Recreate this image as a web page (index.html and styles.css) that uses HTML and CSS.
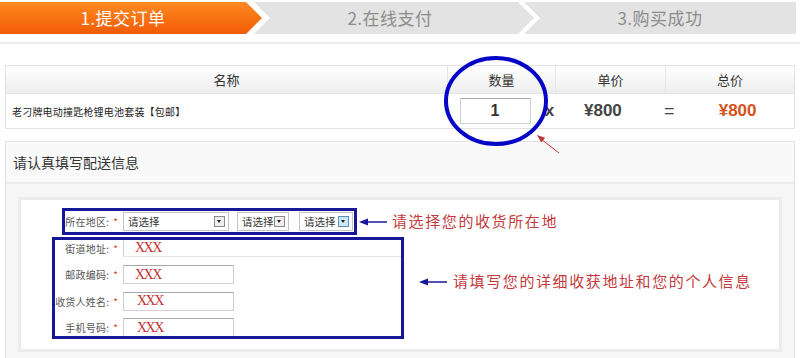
FILE: index.html
```html
<!DOCTYPE html>
<html lang="zh-CN">
<head>
    <meta charset="UTF-8">
    <title>提交订单</title>
    <link rel="stylesheet" href="styles.css">
</head>
<body>
    <div class="steps">
        <div class="step step-first">1.提交订单</div>
        <div class="step step-mid">2.在线支付</div>
        <div class="step step-last">3.购买成功</div>
    </div>
    <div class="steps-line"></div>

    <div class="cart">
        <div class="cart-head">
            <div class="col">名称</div>
            <div class="col">数量</div>
            <div class="col">单价</div>
            <div class="col">总价</div>
        </div>
        <div class="cart-row">
            <div class="item-name">老刁牌电动撞匙枪锂电池套装【包邮】</div>
            <input class="qty-input" type="text" value="1">
            <span class="op">x</span>
            <span class="price">¥800</span>
            <span class="op op-eq">=</span>
            <span class="price price-total">¥800</span>
        </div>
    </div>

    <div class="delivery">
        <div class="delivery-title">请认真填写配送信息</div>
        <div class="delivery-body">
            <div class="form-box">
                <div class="form-row">
                    <label class="form-label">所在地区:<em>*</em></label>
                    <div class="select select-province">请选择<i></i></div>
                    <div class="select select-city">请选择<i></i></div>
                    <div class="select select-area">请选择<i class="hover"></i></div>
                </div>
                <div class="form-row">
                    <label class="form-label">街道地址:<em>*</em></label>
                    <input class="field field-wide" type="text" value="XXX">
                </div>
                <div class="form-row">
                    <label class="form-label">邮政编码:<em>*</em></label>
                    <input class="field" type="text" value="XXX">
                </div>
                <div class="form-row">
                    <label class="form-label">收货人姓名:<em>*</em></label>
                    <input class="field field-shift" type="text" value="XXX">
                </div>
                <div class="form-row">
                    <label class="form-label">手机号码:<em>*</em></label>
                    <input class="field field-shift" type="text" value="XXX">
                </div>
            </div>
        </div>
    </div>

    <!-- annotations drawn on top of the page -->
    <svg class="annot" width="800" height="358" viewBox="0 0 800 358">
        <ellipse cx="496" cy="101" rx="50" ry="43" fill="none" stroke="#0505c8" stroke-width="4"/>
        <line x1="559" y1="153" x2="541" y2="139" stroke="#c23232" stroke-width="1"/>
        <polygon points="537,135 545.1,137.8 541.3,142.4" fill="#c23232"/>
        <rect x="63.5" y="209.5" width="292" height="24" fill="none" stroke="#17179a" stroke-width="3"/>
        <rect x="53.5" y="238.5" width="349" height="99" fill="none" stroke="#17179a" stroke-width="3"/>
        <line x1="365" y1="222" x2="387" y2="222" stroke="#17179a" stroke-width="1.5"/>
        <polygon points="359,222 368,218.5 368,225.5" fill="#17179a"/>
        <line x1="425" y1="282" x2="447" y2="282" stroke="#17179a" stroke-width="1.5"/>
        <polygon points="419,282 428,278.5 428,285.5" fill="#17179a"/>
    </svg>
    <div class="note note-area">请选择您的收货所在地</div>
    <div class="note note-detail">请填写您的详细收获地址和您的个人信息</div>
</body>
</html>
```

FILE: styles.css
```css
body {
    margin: 0;
    width: 800px;
    height: 358px;
    overflow: hidden;
    position: relative;
    background: #fff;
    font-family: "Liberation Sans", "Noto Sans CJK SC", sans-serif;
    color: #333;
}

/* steps bar */
.steps {
    display: flex;
    width: 796px;
    height: 32px;
    margin-top: 2px;
}

.step {
    height: 32px;
    line-height: 32px;
    text-align: center;
    font-family: "Noto Sans CJK SC", sans-serif;
    font-size: 17px;
    letter-spacing: 0.5px;
    color: #8c8c8c;
    background: #e3e3e3;
    box-sizing: border-box;
}

.step-first {
    width: 262px;
    padding-right: 16px;
    color: #fff;
    background: linear-gradient(to bottom, #ff8a22, #f25a04);
    clip-path: polygon(0 0, 246px 0, 262px 50%, 246px 100%, 0 100%);
}

.step-mid {
    width: 280px;
    margin-left: -8px;
    padding-right: 8px;
    clip-path: polygon(0 0, 264px 0, 280px 50%, 264px 100%, 0 100%, 16px 50%);
}

.step-last {
    flex: 1;
    margin-left: -10px;
    clip-path: polygon(0 0, 100% 0, 100% 100%, 0 100%, 16px 50%);
}

.steps-line {
    height: 2px;
    margin-top: 8px;
    background: #ededed;
}

/* cart table */
.cart {
    margin: 21px 5px 0;
    border: 1px solid #e3e3e3;
}

.cart-head {
    display: grid;
    grid-template-columns: 441px 108px 110px 1fr;
    height: 27px;
    border-bottom: 1px solid #e6e6e6;
    background: linear-gradient(to bottom, #fff, #ededed);
}

.cart-head .col {
    line-height: 27px;
    text-align: center;
    font-family: "Noto Sans CJK SC", sans-serif;
    font-size: 13px;
    color: #333;
}

.cart-head .col + .col {
    border-left: 1px solid #e6e6e6;
}

.cart-row {
    display: flex;
    align-items: center;
    height: 34px;
}

.item-name {
    width: 435px;
    padding-left: 6px;
    font-family: "Noto Sans CJK SC", sans-serif;
    font-size: 10px;
    letter-spacing: 0.2px;
    color: #222;
}

.qty-input {
    width: 71px;
    height: 26px;
    margin-left: 17px;
    padding: 0;
    box-sizing: border-box;
    border: 1px solid #cfcfcf;
    border-top-color: #a8a8a8;
    text-align: center;
    font-family: "Liberation Sans", sans-serif;
    font-size: 16px;
    font-weight: bold;
    color: #333;
}

.op {
    width: 18px;
    margin-left: 10px;
    text-align: center;
    font-size: 17px;
    font-weight: bold;
    color: #444;
}

.op-eq {
    width: 24px;
    font-weight: normal;
    font-size: 18px;
}

.price {
    width: 90px;
    text-align: center;
    font-size: 17px;
    font-weight: bold;
    color: #444;
}

.price-total {
    width: 114px;
    color: #d4521c;
}

/* delivery section */
.delivery {
    margin: 12px 5px 0;
    border: 1px solid #e3e3e3;
    border-bottom: none;
}

.delivery-title {
    height: 40px;
    line-height: 40px;
    padding-left: 7px;
    font-family: "Noto Sans CJK SC", sans-serif;
    font-size: 14px;
    color: #333;
    background: #f9f9f9;
    border-bottom: 2px solid #ececec;
}

.delivery-body {
    padding: 13px 12px 10px;
    background: #f6f6f6;
}

.form-box {
    padding: 8.5px 0 8px;
    background: #fff;
    border: 3px solid #ececec;
}

.form-row {
    display: flex;
    align-items: center;
    height: 26.5px;
}

.form-label {
    width: 97px;
    text-align: right;
    font-family: "Noto Sans CJK SC", sans-serif;
    font-size: 10px;
    letter-spacing: 0.2px;
    color: #555;
}

.form-label em {
    font-style: normal;
    margin-left: 4px;
    color: #e03a3a;
}

.select {
    display: flex;
    align-items: center;
    justify-content: space-between;
    height: 19px;
    margin-left: 5px;
    padding-left: 4px;
    box-sizing: border-box;
    border: 1px solid #c4c4c4;
    background: #fff;
    font-family: "Noto Sans CJK SC", sans-serif;
    font-size: 10.5px;
    color: #333;
}

.select i {
    position: relative;
    width: 9px;
    height: 9px;
    margin-right: 3px;
    border: 1px solid #8a8a8a;
    background: #eee;
}

.select i::after {
    content: "";
    position: absolute;
    left: 2px;
    top: 3px;
    border-left: 2.5px solid transparent;
    border-right: 2.5px solid transparent;
    border-top: 3px solid #222;
}

.select i.hover {
    border-color: #5b8fb8;
    background: #cfe6f7;
}

.select-province {
    width: 106px;
}

.select-city {
    width: 52px;
    margin-left: 8px;
}

.select-area {
    width: 54px;
    margin-left: 10px;
}

.field {
    width: 111px;
    height: 19px;
    margin-left: 5px;
    padding: 0 0 0 11px;
    box-sizing: border-box;
    border: 1px solid #cfcfcf;
    border-top-color: #a8a8a8;
    font-family: "Liberation Serif", serif;
    font-size: 14px;
    letter-spacing: -1.5px;
    color: #c23232;
}

.field-wide {
    width: 279px;
    height: 18px;
    border-color: #e4e4ee;
    border-left-color: #cfcfcf;
}

.field-shift {
    padding-left: 13px;
}

/* annotations */
.annot {
    position: absolute;
    left: 0;
    top: 0;
    pointer-events: none;
}

.note {
    position: absolute;
    line-height: 20px;
    font-family: "Noto Sans CJK SC", sans-serif;
    font-size: 15px;
    letter-spacing: 1.6px;
    color: #c43a3c;
}

.note-area {
    left: 392px;
    top: 211px;
}

.note-detail {
    left: 453px;
    top: 271px;
}
```
